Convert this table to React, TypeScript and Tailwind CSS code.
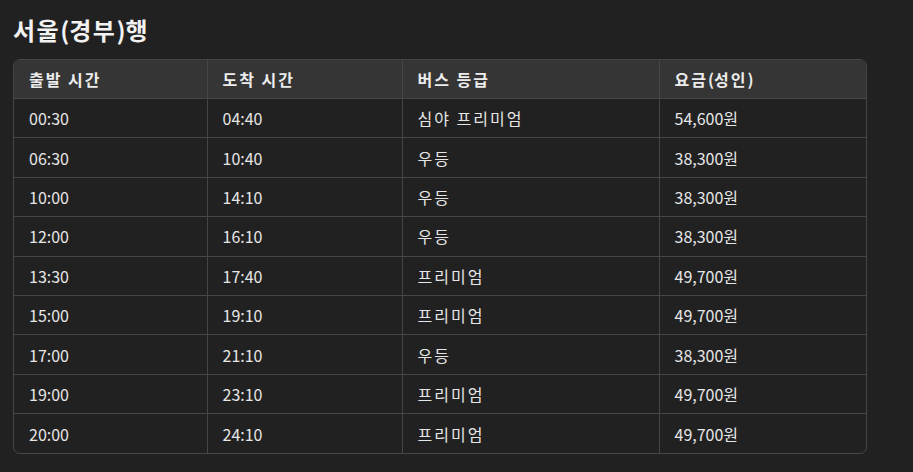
import { Fragment, type ReactNode } from 'react';

const rows: [string, string, string, string][] = [
  ['00:30', '04:40', '심야 프리미엄', '54,600원'],
  ['06:30', '10:40', '우등', '38,300원'],
  ['10:00', '14:10', '우등', '38,300원'],
  ['12:00', '16:10', '우등', '38,300원'],
  ['13:30', '17:40', '프리미엄', '49,700원'],
  ['15:00', '19:10', '프리미엄', '49,700원'],
  ['17:00', '21:10', '우등', '38,300원'],
  ['19:00', '23:10', '프리미엄', '49,700원'],
  ['20:00', '24:10', '프리미엄', '49,700원'],
];

const headers = ['출발 시간', '도착 시간', '버스 등급', '요금(성인)'];
const widths = ['w-[193px]', 'w-[195px]', 'w-[257px]', 'w-[207px]'];

// Hangul runs get a little extra spacing so the glyphs spread like the reference font
function Ko({ text, track }: { text: string; track: string }): ReactNode {
  const parts = text.split(/([\uAC00-\uD7A3 ]+)/).filter(Boolean);
  return (
    <>
      {parts.map((p, i) =>
        /[\uAC00-\uD7A3]/.test(p) ? (
          <span key={i} className={track}>
            {p}
          </span>
        ) : (
          <Fragment key={i}>{p}</Fragment>
        ),
      )}
    </>
  );
}

export default function App() {
  return (
    <div
      className="min-h-[472px] w-full bg-[#212121] px-[13px] pt-[14px] text-[#ececec]"
      style={{ fontFamily: '"Noto Sans CJK KR", "Noto Sans", sans-serif' }}
    >
      <h2 className="mb-[13px] text-[24px] font-bold leading-[32px] text-[#f2f2f2]">
        <Ko text="서울(경부)행" track="tracking-[1.5px]" />
      </h2>
      <div className="w-[854px] overflow-hidden rounded-[7px] border border-[#464646]">
        <table className="w-full table-fixed border-collapse text-[16px]">
          <thead>
            <tr className="bg-[#353535]">
              {headers.map((h, i) => (
                <th
                  key={h}
                  className={`${widths[i]} h-[38.5px] border-l border-[#464646] px-[15px] text-left font-bold first:border-l-0`}
                >
                  <Ko text={h} track="tracking-[2px]" />
                </th>
              ))}
            </tr>
          </thead>
          <tbody>
            {rows.map((r, ri) => (
              <tr key={ri} className="border-t border-[#464646]">
                {r.map((c, ci) => (
                  <td
                    key={ci}
                    className="h-[39.4px] border-l border-[#464646] px-[15px] font-normal text-[#e6e6e6] first:border-l-0"
                  >
                    <Ko text={c} track="tracking-[2px]" />
                  </td>
                ))}
              </tr>
            ))}
          </tbody>
        </table>
      </div>
    </div>
  );
}
